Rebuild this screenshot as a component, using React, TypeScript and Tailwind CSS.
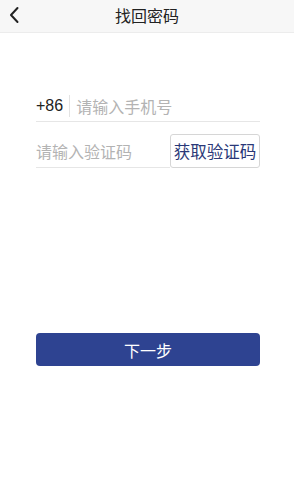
export default function App() {
  return (
    <div className="min-h-[498px] w-full bg-white font-['Noto_Sans_CJK_SC','Noto_Sans',sans-serif]">
      {/* Header */}
      <header className="relative flex h-[33px] items-center justify-center border-b border-[#ececec] bg-[#f7f7f7]">
        <button className="absolute left-[7px] top-[5px] flex h-[20px] w-[14px] items-center justify-center text-[#222]">
          <svg width="12" height="18" viewBox="0 0 12 18" fill="none" stroke="currentColor" strokeWidth="2" strokeLinecap="round" strokeLinejoin="round">
            <path d="M9.5 2 L3 9 L9.5 16" />
          </svg>
        </button>
        <h1 className="-mt-[2px] text-[16px] leading-none text-[#222]">找回密码</h1>
      </header>

      <div className="pl-[36px] pr-[34px] pt-[58px]">
        {/* Phone row */}
        <div className="flex h-[31px] items-center border-b border-[#e6e6e6]">
          <span className="pr-[6px] font-['Liberation_Sans',sans-serif] text-[16px] text-[#222]">+86</span>
          <span className="h-[22px] w-px bg-[#e3e3e3]"></span>
          <span className="pl-[6px] text-[16px] text-[#b3b3b3]">请输入手机号</span>
        </div>

        {/* Code row */}
        <div className="mt-[12px] flex h-[34px] items-center">
          <div className="flex h-full flex-1 items-center border-b border-[#e6e6e6]">
            <span className="text-[16px] text-[#b3b3b3]">请输入验证码</span>
          </div>
          <button className="flex h-[34px] w-[90px] items-center justify-center rounded-[3px] border border-[#d6d6d6] bg-white text-[16.5px] text-[#2a3878]">
            获取验证码
          </button>
        </div>

        {/* Next */}
        <button className="mt-[165px] flex h-[33px] w-full items-center justify-center rounded-[4px] bg-[#2e4391] text-[16px] text-white">
          下一步
        </button>
      </div>
    </div>
  );
}
